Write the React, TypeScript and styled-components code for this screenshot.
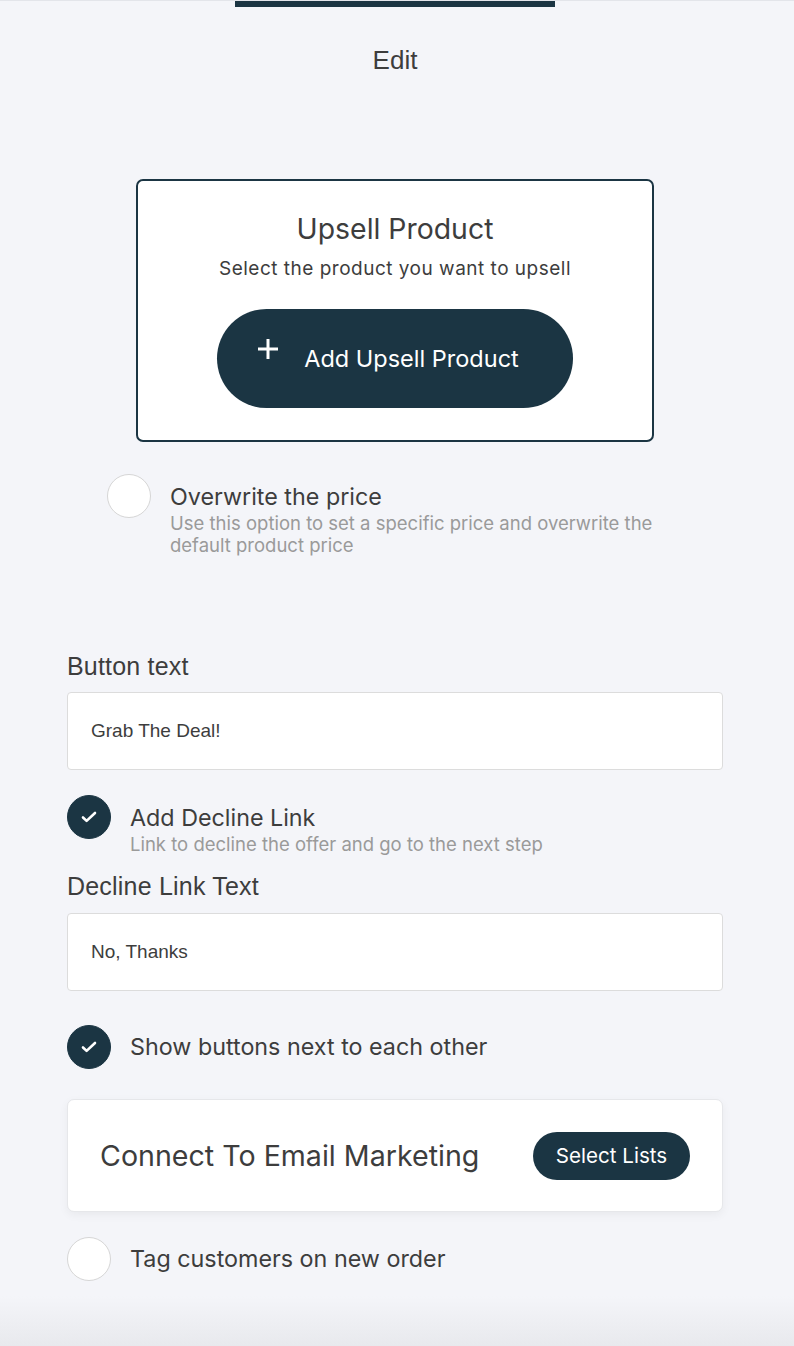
import React from "react";
import styled, { createGlobalStyle } from "styled-components";

const GlobalStyle = createGlobalStyle`
  html, body { margin: 0; padding: 0; }
  body { background: #f4f5f9; }
  * { box-sizing: border-box; }
`;

const DARK = "#1b3543";
const TEXT = "#3d3d3d";
const MUTED = "#9a9a9a";
const BODY_FONT = `Inter, "Noto Sans", sans-serif`;
const ARIAL = `"Liberation Sans", Arial, sans-serif`;

const Page = styled.div`
  min-height: 1346px;
  border-top: 1px solid #e3e5ea;
  background: linear-gradient(to bottom, #f4f5f9 0, #f4f5f9 calc(100% - 50px), #e8e9ed 100%);
  padding-right: 4px;
  display: flex;
  flex-direction: column;
  align-items: center;
`;

const TopBar = styled.div`
  width: 320px;
  height: 6px;
  background: ${DARK};
`;

const PageTitle = styled.h1`
  margin: 39px 0 0;
  font-family: ${ARIAL};
  font-weight: 400;
  font-size: 26px;
  line-height: 28px;
  color: ${TEXT};
`;

const ProductCard = styled.section`
  margin-top: 105px;
  width: 518px;
  border: 2px solid ${DARK};
  border-radius: 7px;
  background: #fff;
  padding: 31px 0 32px;
  display: flex;
  flex-direction: column;
  align-items: center;
  font-family: ${BODY_FONT};
`;

const CardTitle = styled.h2`
  margin: 0;
  font-weight: 400;
  font-size: 28.4px;
  line-height: 34px;
  color: ${TEXT};
`;

const CardSubtitle = styled.p`
  margin: 11px 0 0;
  font-size: 19px;
  letter-spacing: 0.5px;
  line-height: 24px;
  color: ${TEXT};
`;

const AddButton = styled.button`
  margin-top: 28px;
  width: 356px;
  height: 99px;
  border: none;
  border-radius: 50px;
  background: ${DARK};
  color: #fff;
  font-family: ${BODY_FONT};
  font-size: 23.5px;
  display: flex;
  align-items: center;
  justify-content: center;
  gap: 25px;
  padding: 0 14px 0 0;
  cursor: pointer;
  svg { margin-bottom: 20px; }
`;

const Content = styled.div`
  width: 656px;
  display: flex;
  flex-direction: column;
  font-family: ${BODY_FONT};
`;

const OptionRow = styled.div<{ $mt: number; $indent?: number }>`
  margin-top: ${(p) => p.$mt}px;
  padding-left: ${(p) => p.$indent ?? 0}px;
  display: flex;
  align-items: flex-start;
  gap: 19px;
`;

const Circle = styled.span<{ $checked?: boolean }>`
  flex: none;
  width: 44px;
  height: 44px;
  border-radius: 50%;
  background: ${(p) => (p.$checked ? DARK : "#fff")};
  border: 1px solid ${(p) => (p.$checked ? DARK : "#d6d6d6")};
  display: flex;
  align-items: center;
  justify-content: center;
`;

const OptionText = styled.div<{ $pt: number }>`
  padding-top: ${(p) => p.$pt}px;
  display: flex;
  flex-direction: column;
`;

const OptionTitle = styled.span`
  font-size: 23.3px;
  line-height: 26px;
  color: ${TEXT};
`;

const OptionDesc = styled.span`
  margin-top: 2px;
  font-size: 18.5px;
  line-height: 22px;
  color: ${MUTED};
  max-width: 500px;
`;

const FieldLabel = styled.label<{ $mt: number }>`
  margin-top: ${(p) => p.$mt}px;
  font-family: ${ARIAL};
  font-size: 25px;
  letter-spacing: 0.2px;
  line-height: 26px;
  color: ${TEXT};
`;

const TextInput = styled.div<{ $mt: number }>`
  margin-top: ${(p) => p.$mt}px;
  height: 78px;
  border: 1px solid #dcdcdc;
  border-radius: 4px;
  background: #fff;
  padding-left: 23px;
  display: flex;
  align-items: center;
  font-family: ${ARIAL};
  font-size: 19px;
  color: ${TEXT};
`;

const EmailCard = styled.div`
  margin-top: 30px;
  height: 113px;
  background: #fff;
  border: 1px solid #e6e7ea;
  border-radius: 7px;
  box-shadow: 0 3px 10px rgba(0, 0, 0, 0.05);
  padding: 0 32px;
  display: flex;
  align-items: center;
  justify-content: space-between;
`;

const EmailTitle = styled.span`
  font-size: 28.6px;
  color: ${TEXT};
`;

const SelectButton = styled.button`
  width: 157px;
  height: 48px;
  border: none;
  border-radius: 24px;
  background: ${DARK};
  color: #fff;
  font-family: ${BODY_FONT};
  font-size: 20.6px;
  cursor: pointer;
`;

const Check = () => (
  <svg width="18" height="18" viewBox="0 0 18 18" fill="none">
    <path d="M3 9.5l3.6 3.4L15 5" stroke="#fff" strokeWidth="2.6" strokeLinecap="round" strokeLinejoin="round" />
  </svg>
);

const Plus = () => (
  <svg width="22" height="22" viewBox="0 0 22 22" fill="none">
    <path d="M11 1v20M1 11h20" stroke="#fff" strokeWidth="3" />
  </svg>
);

export default function App() {
  return (
    <>
      <GlobalStyle />
      <Page>
        <TopBar />
        <PageTitle>Edit</PageTitle>
        <ProductCard>
          <CardTitle>Upsell Product</CardTitle>
          <CardSubtitle>Select the product you want to upsell</CardSubtitle>
          <AddButton>
            <Plus />
            Add Upsell Product
          </AddButton>
        </ProductCard>
        <Content>
          <OptionRow $mt={32} $indent={40}>
            <Circle />
            <OptionText $pt={10}>
              <OptionTitle>Overwrite the price</OptionTitle>
              <OptionDesc>Use this option to set a specific price and overwrite the default product price</OptionDesc>
            </OptionText>
          </OptionRow>
          <FieldLabel $mt={97}>Button text</FieldLabel>
          <TextInput $mt={13}>Grab The Deal!</TextInput>
          <OptionRow $mt={25}>
            <Circle $checked>
              <Check />
            </Circle>
            <OptionText $pt={10}>
              <OptionTitle>Add Decline Link</OptionTitle>
              <OptionDesc>Link to decline the offer and go to the next step</OptionDesc>
            </OptionText>
          </OptionRow>
          <FieldLabel $mt={18}>Decline Link Text</FieldLabel>
          <TextInput $mt={14}>No, Thanks</TextInput>
          <OptionRow $mt={34}>
            <Circle $checked>
              <Check />
            </Circle>
            <OptionText $pt={9}>
              <OptionTitle>Show buttons next to each other</OptionTitle>
            </OptionText>
          </OptionRow>
          <EmailCard>
            <EmailTitle>Connect To Email Marketing</EmailTitle>
            <SelectButton>Select Lists</SelectButton>
          </EmailCard>
          <OptionRow $mt={25}>
            <Circle />
            <OptionText $pt={9}>
              <OptionTitle>Tag customers on new order</OptionTitle>
            </OptionText>
          </OptionRow>
        </Content>
      </Page>
    </>
  );
}
